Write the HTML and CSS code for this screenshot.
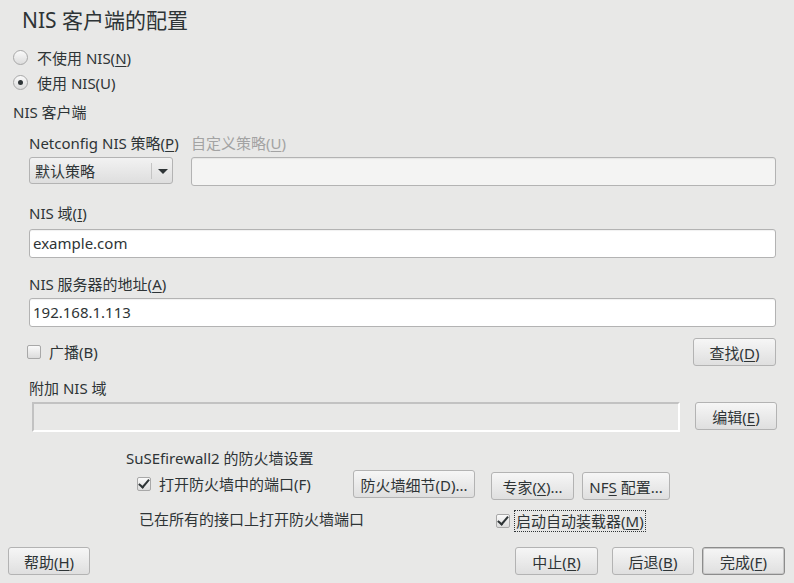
FILE: index.html
```html
<!DOCTYPE html>
<html lang="zh-CN">
<head>
    <meta charset="UTF-8">
    <title>NIS 客户端的配置</title>
    <link rel="stylesheet" href="styles.css">
</head>
<body>
    <div class="dialogo">
        <h1 class="titulo">NIS 客户端的配置</h1>

        <div class="contenido">
            <div class="opcion-radio"><span class="radio"></span>不使用 NIS(<u>N</u>)</div>
            <div class="opcion-radio"><span class="radio activo"></span>使用 NIS(U)</div>

            <div class="seccion">NIS 客户端</div>

            <div class="cliente">
                <!-- Política netconfig -->
                <div class="fila-politica">
                    <div class="campo politica">
                        <div class="etiqueta">Netconfig NIS 策略(<u>P</u>)</div>
                        <div class="combo"><span>默认策略</span><span class="flecha"></span></div>
                    </div>
                    <div class="campo personalizada">
                        <div class="etiqueta inactiva">自定义策略(<u>U</u>)</div>
                        <div class="entrada"></div>
                    </div>
                </div>

                <div class="etiqueta et-dominio">NIS 域(<u>I</u>)</div>
                <div class="entrada">example.com</div>

                <div class="etiqueta et-servidor">NIS 服务器的地址(<u>A</u>)</div>
                <div class="entrada">192.168.1.113</div>

                <div class="fila-difusion">
                    <div class="opcion-check"><span class="check"></span>广播(B)</div>
                    <button class="boton ancho-82">查找(<u>D</u>)</button>
                </div>

                <div class="etiqueta et-adicional">附加 NIS 域</div>
                <div class="fila-dominios">
                    <div class="entrada hundida"></div>
                    <button class="boton ancho-81">编辑(<u>E</u>)</button>
                </div>
            </div>

            <!-- Cortafuegos -->
            <div class="cortafuegos">
                <div class="cf-izquierda">
                    <div class="cf-titulo">SuSEfirewall2 的防火墙设置</div>
                    <div class="cf-fila">
                        <div class="opcion-check cf-puerto"><span class="check marcado"></span>打开防火墙中的端口(F)</div>
                        <button class="boton ancho-121">防火墙细节(D)...</button>
                    </div>
                    <div class="cf-nota">已在所有的接口上打开防火墙端口</div>
                </div>
                <div class="cf-derecha">
                    <div class="cf-botones">
                        <button class="boton ancho-82">专家(<u>X</u>)...</button>
                        <button class="boton ancho-87">NF<u>S</u> 配置...</button>
                    </div>
                    <div class="opcion-check automontador"><span class="check marcado"></span><span class="foco">启动自动装载器(<u>M</u>)</span></div>
                </div>
            </div>
        </div>

        <div class="pie">
            <button class="boton ancho-81">帮助(<u>H</u>)</button>
            <div class="pie-derecha">
                <button class="boton ancho-82">中止(<u>R</u>)</button>
                <button class="boton ancho-81">后退(<u>B</u>)</button>
                <button class="boton ancho-82 defecto">完成(<u>F</u>)</button>
            </div>
        </div>
    </div>
</body>
</html>
```

FILE: styles.css
```css
body {
    margin: 0;
    padding: 0;
    background-color: #e8e8e7;
    font-family: "Noto Sans", "Noto Sans CJK SC", sans-serif;
    font-size: 15px;
    color: #2e3436;
}
.dialogo {
    width: 794px;
    height: 583px;
    overflow: hidden;
}
u {
    text-underline-offset: 2px;
}
.titulo {
    margin: 0;
    padding: 6px 22px 0;
    font-size: 21px;
    font-weight: normal;
    line-height: 28px;
}
.contenido {
    padding: 11px 18px 0 13px;
}
.opcion-radio {
    display: flex;
    align-items: center;
    height: 25px;
}
.radio {
    width: 13px;
    height: 13px;
    border: 1px solid #a8a8a8;
    border-radius: 50%;
    background: linear-gradient(#fafafa, #dcdcdc);
    margin-right: 9px;
    position: relative;
}
.radio.activo::after {
    content: "";
    position: absolute;
    left: 4px;
    top: 4px;
    width: 5px;
    height: 5px;
    border-radius: 50%;
    background-color: #2e3436;
}
.seccion {
    margin-top: 5px;
    line-height: 24px;
}
.cliente {
    padding-left: 16px;
}
.etiqueta {
    line-height: 20px;
    white-space: nowrap;
}
.etiqueta.inactiva {
    color: #a3a3a3;
}
.et-dominio {
    margin-top: 17px;
    margin-bottom: 6px;
}
.et-servidor {
    margin-top: 16px;
    margin-bottom: 4px;
}
.et-adicional {
    margin-top: 12px;
    margin-bottom: 4px;
}
.fila-politica {
    display: flex;
    gap: 18px;
    margin-top: 9px;
}
.campo .etiqueta {
    margin-bottom: 4px;
}
.politica {
    width: 144px;
}
.personalizada {
    flex: 1;
}
.combo {
    display: flex;
    align-items: center;
    justify-content: space-between;
    height: 25px;
    border: 1px solid #b3b3b3;
    border-radius: 3px;
    background: linear-gradient(#f2f2f2, #dedede);
    padding-left: 5px;
}
.flecha {
    width: 20px;
    height: 16px;
    border-left: 1px solid #c4c4c4;
    position: relative;
}
.flecha::after {
    content: "";
    position: absolute;
    left: 6px;
    top: 6px;
    border-left: 5px solid transparent;
    border-right: 5px solid transparent;
    border-top: 5px solid #2e3436;
}
.entrada {
    height: 27px;
    line-height: 27px;
    border: 1px solid #b3b3b3;
    border-radius: 3px;
    background-color: #ffffff;
    padding-left: 3px;
    box-shadow: inset 0 1px 1px rgba(0, 0, 0, 0.06);
}
.personalizada .entrada {
    background-color: #f4f4f3;
}
.fila-difusion {
    display: flex;
    align-items: center;
    justify-content: space-between;
    margin-top: 11px;
    margin-left: -2px;
}
.opcion-check {
    display: flex;
    align-items: center;
    line-height: 20px;
}
.check {
    width: 12px;
    height: 12px;
    border: 1px solid #a8a8a8;
    border-radius: 2px;
    background: linear-gradient(#fafafa, #dcdcdc);
    margin-right: 8px;
    position: relative;
}
.check.marcado::after {
    content: "";
    position: absolute;
    left: 3px;
    top: -1px;
    width: 4px;
    height: 9px;
    border-right: 2px solid #2e3436;
    border-bottom: 2px solid #2e3436;
    transform: rotate(40deg);
}
.boton {
    height: 28px;
    border: 1px solid #b3b3b3;
    border-radius: 3px;
    background: linear-gradient(#f6f6f6, #dfdfdf);
    font-family: inherit;
    font-size: 15px;
    color: #2e3436;
    padding: 0;
    white-space: nowrap;
}
.boton.defecto {
    border-color: #8c8c8c;
    box-shadow: inset 0 0 0 1px #c8c8c8;
}
.ancho-81 { width: 82px; }
.ancho-82 { width: 83px; }
.ancho-87 { width: 88px; }
.ancho-121 { width: 122px; }
.fila-dominios {
    display: flex;
    gap: 15px;
    align-items: flex-start;
}
.entrada.hundida {
    flex: 1;
    height: 26px;
    margin-left: 3px;
    border-radius: 0;
    border: 2px solid #ffffff;
    border-top-color: #c2c2c2;
    border-left-color: #c2c2c2;
    background-color: #e8e8e7;
    box-shadow: none;
}
.fila-dominios .boton {
    margin-right: -1px;
}
.cortafuegos {
    display: flex;
    padding-left: 113px;
    margin-top: 14px;
}
.cf-izquierda {
    width: 365px;
}
.cf-titulo {
    line-height: 24px;
}
.cf-fila {
    display: flex;
    align-items: center;
    padding-left: 11px;
}
.cf-puerto {
    width: 216px;
    white-space: nowrap;
}
.cf-nota {
    padding-left: 13px;
    margin-top: 11px;
    line-height: 20px;
}
.cf-derecha {
    padding-top: 26px;
}
.cf-botones {
    display: flex;
    gap: 8px;
}
.automontador {
    margin-top: 11px;
    margin-left: 5px;
    white-space: nowrap;
}
.automontador .check {
    margin-right: 5px;
}
.foco {
    outline: 1px dotted #2e3436;
    padding: 0 1px;
}
.pie {
    display: flex;
    justify-content: space-between;
    padding: 16px 9px 0 8px;
}
.pie-derecha {
    display: flex;
    gap: 8px;
}
.pie-derecha .boton:first-child {
    margin-right: 6px;
}
```
